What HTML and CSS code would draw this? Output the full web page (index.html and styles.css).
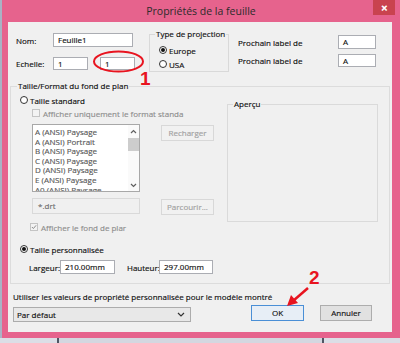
FILE: index.html
```html
<!DOCTYPE html>
<html lang="fr">
<head>
    <meta charset="UTF-8">
    <title>Propriétés de la feuille</title>
    <link rel="stylesheet" href="styles.css">
</head>
<body>
    <div class="window">
        <div class="titlebar">
            <div class="title">Propriétés de la feuille</div>
            <div class="close">&#x2715;</div>
        </div>

        <div class="client">
            <div class="top">
                <div class="ident">
                    <div class="row row-name">
                        <span class="lbl w37">Nom:</span>
                        <div class="input w80">Feuille1</div>
                    </div>
                    <div class="row row-scale">
                        <span class="lbl w37">Echelle:</span>
                        <div class="input w35 h13">1</div>
                        <div class="input w35 h13 gap12">1</div>
                    </div>
                </div>

                <div class="group proj">
                    <span class="legend">Type de projection</span>
                    <div class="opt opt-first"><span class="radio on"></span>Europe</div>
                    <div class="opt"><span class="radio"></span>USA</div>
                </div>

                <div class="labels">
                    <div class="row row-label1">
                        <span class="lbl w100">Prochain label de</span>
                        <div class="input w38">A</div>
                    </div>
                    <div class="row row-label2">
                        <span class="lbl w100">Prochain label de</span>
                        <div class="input w38 h13">A</div>
                    </div>
                </div>
            </div>

            <div class="group format">
                <span class="legend">Taille/Format du fond de plan</span>
                <div class="format-left">
                    <div class="opt std"><span class="radio"></span>Taille standard</div>
                    <div class="opt chk-only disabled"><span class="check"></span>Afficher uniquement le format standa</div>

                    <div class="list-row">
                        <div class="listbox">
                            <ul class="items">
                                <li>A (ANSI) Paysage</li>
                                <li>A (ANSI) Portrait</li>
                                <li>B (ANSI) Paysage</li>
                                <li>C (ANSI) Paysage</li>
                                <li>D (ANSI) Paysage</li>
                                <li>E (ANSI) Paysage</li>
                                <li>A0 (ANSI) Paysage</li>
                            </ul>
                            <div class="scrollbar">
                                <svg class="arrow-up" width="7" height="5" viewBox="0 0 7 5"><polyline points="1,4 3.5,1.5 6,4" fill="none" stroke="#606060" stroke-width="1.2"/></svg>
                                <div class="thumb"></div>
                                <svg class="arrow-down" width="7" height="5" viewBox="0 0 7 5"><polyline points="1,1 3.5,3.5 6,1" fill="none" stroke="#606060" stroke-width="1.2"/></svg>
                            </div>
                        </div>
                        <div class="btn disabled-btn">Recharger</div>
                    </div>

                    <div class="drt-row">
                        <div class="input drt">*.drt</div>
                        <div class="btn disabled-btn">Parcourir...</div>
                    </div>

                    <div class="opt chk-bg disabled">
                        <span class="check">
                            <svg width="8" height="8" viewBox="0 0 8 8"><polyline points="1.2,4 3.2,6 6.8,1.8" fill="none" stroke="#8a8a8a" stroke-width="1.3"/></svg>
                        </span>Afficher le fond de plar
                    </div>

                    <div class="opt perso"><span class="radio on"></span>Taille personnalisée</div>

                    <div class="size-row">
                        <span class="lbl w31">Largeur:</span>
                        <div class="input w55">210.00mm</div>
                        <span class="lbl w32 hlabel">Hauteur:</span>
                        <div class="input w54">297.00mm</div>
                    </div>
                </div>

                <div class="group preview">
                    <span class="legend">Aperçu</span>
                </div>
            </div>

            <div class="model-label">Utiliser les valeurs de propriété personnalisée pour le modèle montré</div>
            <div class="actions">
                <div class="select">
                    <span>Par défaut</span>
                    <svg width="8" height="5" viewBox="0 0 8 5"><polyline points="1,1 4,4 7,1" fill="none" stroke="#333" stroke-width="1.2"/></svg>
                </div>
                <div class="btn ok">OK</div>
                <div class="btn cancel">Annuler</div>
            </div>
        </div>
    </div>
    <div class="taskbar"><div class="task"></div></div>

    <svg class="annot" width="400" height="343" viewBox="0 0 400 343">
        <ellipse cx="118.5" cy="61.5" rx="24.5" ry="10" fill="none" stroke="#e8141f" stroke-width="2"/>
        <text x="140" y="85" class="mark">1</text>
        <text x="309" y="284" class="mark">2</text>
        <line x1="308" y1="288" x2="293" y2="301" stroke="#e8141f" stroke-width="2.5"/>
        <polygon points="287,306 298,303 291,295" fill="#e8141f"/>
    </svg>
</body>
</html>
```

FILE: styles.css
```css
* {
    margin: 0;
    padding: 0;
    box-sizing: border-box;
}

body {
    width: 400px;
    height: 343px;
    overflow: hidden;
    position: relative;
    background: #a9b3c5;
    font-family: "Open Sans", "Noto Sans", sans-serif;
    font-size: 8px;
    color: #0e0e0e;
    -webkit-text-stroke: 0.15px;
}

.window {
    margin-left: 2px;
    width: 398px;
    height: 338px;
    background: #e6638d;
    padding: 0 8px 6px 6px;
}

.titlebar {
    display: flex;
    height: 22px;
    margin: 0 -8px 0 -6px;
    padding: 0 5px 0 27px;
}

.title {
    flex: 1;
    text-align: center;
    font-size: 10.5px;
    line-height: 22px;
    color: #2b2b2b;
    -webkit-text-stroke: 0;
}

.close {
    width: 22px;
    height: 15px;
    background: #c9434f;
    color: #fff;
    font-size: 8px;
    font-weight: bold;
    text-align: center;
    line-height: 15px;
}

.client {
    height: 310px;
    background: #f0f0f0;
}

/* top part */
.top {
    display: flex;
    height: 64px;
}

.ident {
    margin-left: 8px;
}

.row {
    display: flex;
    align-items: center;
}

.row-name {
    margin-top: 11px;
}

.row-scale {
    margin-top: 10px;
}

.lbl {
    display: inline-block;
    white-space: nowrap;
}

.w31 { width: 31px; }
.w32 { width: 32px; }
.w37 { width: 37px; }
.w100 { width: 100px; }

.input {
    height: 14px;
    border: 1px solid #abadb3;
    background: #fff;
    padding-left: 4px;
    line-height: 12px;
    white-space: nowrap;
    overflow: hidden;
}

.w35 { width: 35px; }
.w38 { width: 38px; }
.w54 { width: 54px; }
.w55 { width: 55px; }
.w80 { width: 80px; }
.h13 { height: 13px; line-height: 11px; }
.gap12 { margin-left: 12px; }

.group {
    position: relative;
    border: 1px solid #d9d9d9;
}

.legend {
    position: absolute;
    top: -6px;
    left: 5px;
    padding: 0 1px;
    background: #f0f0f0;
    line-height: 10px;
    white-space: nowrap;
}

.proj {
    margin: 12px 0 0 14px;
    width: 80px;
    height: 38px;
}

.opt {
    display: flex;
    align-items: center;
    height: 10px;
    white-space: nowrap;
}

.proj .opt {
    margin-left: 9px;
}

.proj .opt-first {
    margin-top: 10px;
    margin-bottom: 4px;
}

.radio {
    width: 8px;
    height: 8px;
    border: 1px solid #333;
    border-radius: 50%;
    background: #fff;
    margin-right: 2px;
    display: flex;
    align-items: center;
    justify-content: center;
}

.radio.on::after {
    content: "";
    width: 4px;
    height: 4px;
    border-radius: 50%;
    background: #111;
}

.labels {
    margin-left: 9px;
}

.row-label1 {
    margin-top: 13px;
}

.row-label2 {
    margin-top: 5px;
}

/* format group */
.format {
    display: flex;
    align-items: flex-start;
    margin-left: 2px;
    width: 380px;
    height: 198px;
    border-color: #dcdcdc;
}

.format > .legend {
    left: 6px;
}

.format-left {
    width: 216px;
}

.std {
    margin: 8px 0 0 9px;
}

.disabled {
    color: #8d8d8d;
}

.check {
    width: 8px;
    height: 8px;
    border: 1px solid #c4c4c4;
    background: #f3f3f3;
    margin-right: 3px;
    display: flex;
    align-items: center;
    justify-content: center;
}

.check svg {
    display: block;
}

.chk-only {
    margin: 3px 0 0 21px;
}

.list-row {
    display: flex;
    align-items: flex-start;
    margin: 6px 0 0 21px;
}

.listbox {
    display: flex;
    width: 108px;
    height: 68px;
    border: 1px solid #a8a8a8;
    background: #fff;
    overflow: hidden;
}

.items {
    flex: 1;
    list-style: none;
    padding: 2px 0 0 2px;
    color: #585858;
    line-height: 9.6px;
    white-space: nowrap;
}

.scrollbar {
    width: 11px;
    display: flex;
    flex-direction: column;
    align-items: center;
    background: #fafafa;
}

.arrow-up {
    margin-top: 4px;
}

.thumb {
    width: 11px;
    height: 13px;
    margin-top: 4px;
    background: #cdcdcd;
}

.arrow-down {
    margin-top: auto;
    margin-bottom: 3px;
}

.btn {
    height: 16px;
    border: 1px solid #adadad;
    background: #e1e1e1;
    text-align: center;
    line-height: 14px;
}

.disabled-btn {
    width: 53px;
    margin: 1px 0 0 21px;
    border-color: #d8d8d8;
    background: #f1f1f1;
    color: #a0a0a0;
}

.drt-row {
    display: flex;
    align-items: flex-start;
    margin: 6px 0 0 21px;
}

.drt {
    width: 108px;
    height: 16px;
    line-height: 14px;
    border-color: #d9d9d9;
    background: #f0f0f0;
    color: #6d6d6d;
    padding-left: 5px;
}

.chk-bg {
    margin: 7px 0 0 19px;
}

.perso {
    margin: 12px 0 0 9px;
}

.size-row {
    display: flex;
    align-items: center;
    margin: 6px 0 0 18px;
}

.hlabel {
    margin-left: 12px;
}

.preview {
    margin-top: 17px;
    width: 151px;
    height: 118px;
    border-color: #dadada;
}

/* bottom */
.model-label {
    margin: 8px 0 0 5px;
    height: 10px;
    line-height: 10px;
    white-space: nowrap;
}

.actions {
    display: flex;
    align-items: flex-start;
    margin-top: 3px;
}

.select {
    display: flex;
    align-items: center;
    justify-content: space-between;
    margin: 2px 0 0 5px;
    width: 178px;
    height: 15px;
    border: 1px solid #acacac;
    background: #e8e8e8;
    padding: 0 5px 0 3px;
}

.ok {
    width: 53px;
    margin-left: 60px;
    border-color: #4a8fd6;
    background: #e7eef6;
}

.cancel {
    width: 52px;
    margin-left: 16px;
}

.taskbar {
    height: 5px;
    background: #dcdee6;
}

.task {
    margin-left: 57px;
    width: 267px;
    height: 5px;
    border-left: 2px solid #4f5563;
    border-right: 2px solid #4f5563;
    background: #d4d7e0;
}

.annot {
    position: absolute;
    top: 0;
    left: 0;
    pointer-events: none;
}

.mark {
    font-family: "Liberation Sans", Arial, sans-serif;
    font-weight: bold;
    font-size: 19px;
    fill: #e8141f;
}
```
